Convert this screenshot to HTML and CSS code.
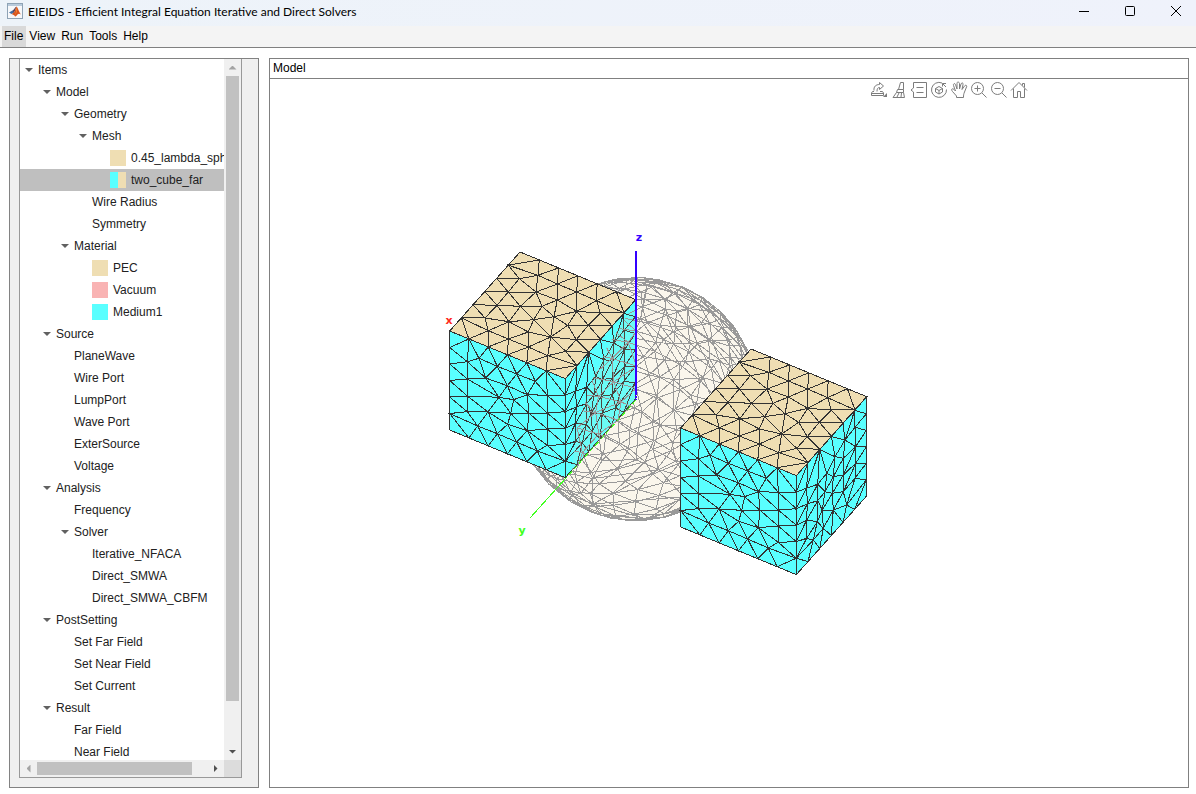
FILE: index.html
```html
<!DOCTYPE html>
<html lang="en">
<head>
    <meta charset="UTF-8">
    <meta name="viewport" content="width=device-width, initial-scale=1.0">
    <title>EIEIDS - Efficient Integral Equation Iterative and Direct Solvers</title>
    <link rel="stylesheet" href="styles.css">
</head>
<body>
  <header class="titlebar">
    <svg class="logo" width="16" height="16" viewBox="0 0 16 16">
      <rect x="0.5" y="0.5" width="15" height="15" fill="#f7f8fa" stroke="#8fa3b5"/>
      <rect x="1" y="1" width="14" height="2" fill="#b9cbdc"/>
      <path d="M2 9.500L5.500 7.500L7 9.500L4.500 11Z" fill="#3d6fa8"/>
      <path d="M5.500 7.500C7 7 8 4 9.500 3.500L8 8L6.500 10Z" fill="#5b4a63"/>
      <path d="M9.500 3.500C10.500 4 12 9 14 11.500C12.500 10.500 11.500 10.500 10.500 11.500C9.500 13 8.500 13.500 8 13.500C7.500 12 6 11.500 4.500 11L7 9.500C8 8 9 5 9.500 3.500Z" fill="#d9541e"/>
      <path d="M9.500 4C9.500 7 9 10 8 13C9 10.500 10.500 8 9.500 4Z" fill="#f7a543"/>
    </svg>
    <h1>EIEIDS - Efficient Integral Equation Iterative and Direct Solvers</h1>
    <div class="window-buttons">
      <button aria-label="Minimize"><svg width="12" height="12"><path d="M1 6.500H11"/></svg></button>
      <button aria-label="Maximize"><svg width="12" height="12"><rect x="1.500" y="1.500" width="9" height="9" rx="1"/></svg></button>
      <button aria-label="Close"><svg width="12" height="12"><path d="M1 1L11 11M11 1L1 11"/></svg></button>
    </div>
  </header>

  <nav class="menubar">
    <button class="active">File</button>
    <button>View</button>
    <button>Run</button>
    <button>Tools</button>
    <button>Help</button>
  </nav>

  <main>
    <aside class="sidebar">
      <div class="tree">
        <ul class="nodes">
          <li class="level-0"><button class="arrow" aria-label="Toggle Items"></button>Items</li>
          <li class="level-1"><button class="arrow" aria-label="Toggle Model"></button>Model</li>
          <li class="level-2"><button class="arrow" aria-label="Toggle Geometry"></button>Geometry</li>
          <li class="level-3"><button class="arrow" aria-label="Toggle Mesh"></button>Mesh</li>
          <li class="level-4 leaf"><i class="swatch pec"></i>0.45_lambda_sph</li>
          <li class="level-4 leaf selected"><i class="swatch mixed"></i>two_cube_far</li>
          <li class="level-3 leaf">Wire Radius</li>
          <li class="level-3 leaf">Symmetry</li>
          <li class="level-2"><button class="arrow" aria-label="Toggle Material"></button>Material</li>
          <li class="level-3 leaf"><i class="swatch pec"></i>PEC</li>
          <li class="level-3 leaf"><i class="swatch vacuum"></i>Vacuum</li>
          <li class="level-3 leaf"><i class="swatch medium"></i>Medium1</li>
          <li class="level-1"><button class="arrow" aria-label="Toggle Source"></button>Source</li>
          <li class="level-2 leaf">PlaneWave</li>
          <li class="level-2 leaf">Wire Port</li>
          <li class="level-2 leaf">LumpPort</li>
          <li class="level-2 leaf">Wave Port</li>
          <li class="level-2 leaf">ExterSource</li>
          <li class="level-2 leaf">Voltage</li>
          <li class="level-1"><button class="arrow" aria-label="Toggle Analysis"></button>Analysis</li>
          <li class="level-2 leaf">Frequency</li>
          <li class="level-2"><button class="arrow" aria-label="Toggle Solver"></button>Solver</li>
          <li class="level-3 leaf">Iterative_NFACA</li>
          <li class="level-3 leaf">Direct_SMWA</li>
          <li class="level-3 leaf">Direct_SMWA_CBFM</li>
          <li class="level-1"><button class="arrow" aria-label="Toggle PostSetting"></button>PostSetting</li>
          <li class="level-2 leaf">Set Far Field</li>
          <li class="level-2 leaf">Set Near Field</li>
          <li class="level-2 leaf">Set Current</li>
          <li class="level-1"><button class="arrow" aria-label="Toggle Result"></button>Result</li>
          <li class="level-2 leaf">Far Field</li>
          <li class="level-2 leaf">Near Field</li>
        </ul>
        <div class="scrollbar vertical">
          <button class="up" aria-label="Scroll up"></button>
          <div class="track"><div class="thumb"></div></div>
          <button class="down" aria-label="Scroll down"></button>
        </div>
        <div class="scrollbar horizontal">
          <button class="left" aria-label="Scroll left"></button>
          <div class="track"><div class="thumb"></div></div>
          <button class="right" aria-label="Scroll right"></button>
        </div>
        <div class="corner"></div>
      </div>
    </aside>

    <section class="viewer">
      <h2>Model</h2>
      <div class="toolbar">
        <button aria-label="Export"><svg viewBox="0 0 20 20"><path d="M5 11.500H3.500L2.500 13V15.500H14.500V13L13.500 11.500H11M2.500 13.500H14.500"/><path d="M5 10.500C4.500 6.500 7 4.500 10.500 4.500V2.500L14.500 6L10.500 9.500V7.500C8.500 7.500 8 9 8 11.500"/><path class="solid" d="M18 13V17H14Z"/></svg></button>
        <button aria-label="Brush"><svg viewBox="0 0 20 20"><path d="M9.500 9.500L11.500 2.500H14.500V9.500M8.500 9.500H14.500V12.500H7.500ZM7.500 12.500L4 17.500H15.500L14.500 12.500M8 17L10 13M12 17L12.500 13"/></svg></button>
        <button aria-label="Data tips"><svg viewBox="0 0 20 20"><path d="M4.500 2.500H17.500V17.500H4.500V12L2 10L4.500 8ZM7.500 7.500H14.500M7.500 12.500H14.500"/></svg></button>
        <button aria-label="Rotate"><svg viewBox="0 0 20 20"><path d="M13 3A7.500 7.500 0 1 0 17.500 9.500M13.500 6.500V3.500H17M13.500 3.500L17 7"/><path class="bold" d="M10 6.500L13.500 8.500V12L10 14L6.500 12V8.500ZM6.500 8.500L10 10.500L13.500 8.500M10 10.500V14"/></svg></button>
        <button aria-label="Pan"><svg viewBox="0 0 20 20"><path d="M7.500 17.500V16L3.500 11.500C1.500 9 3.500 8 5 9.500L6.500 11L4.500 5.500C4 3.500 6 3 6.500 4.500L8 9V3.500C8 1.500 10 1.500 10.500 3.500V9L12 4C12.500 2.500 14.500 2.500 14 4.500L13 9.500L15.500 6C16.500 4.500 18.500 5.500 17.500 7L15.500 12C14.500 14.500 14.500 15 14.500 17.500Z"/></svg></button>
        <button aria-label="Zoom in"><svg viewBox="0 0 20 20"><circle cx="8.500" cy="8.500" r="6"/><path d="M13 13L17.500 17.500M5.500 8.500H11.500M8.500 5.500V11.500"/></svg></button>
        <button aria-label="Zoom out"><svg viewBox="0 0 20 20"><circle cx="8.500" cy="8.500" r="6"/><path d="M13 13L17.500 17.500M5.500 8.500H11.500"/></svg></button>
        <button aria-label="Restore view"><svg viewBox="0 0 20 20"><path d="M2 10.500L10 2.500L18 10.500M4.500 8.500V17.500H8.500V11.500H11.500V17.500H15.500V8.500M13.500 5.500V3.500H15.500V7.500"/></svg></button>
      </div>
      <svg class="scene" viewBox="270 101 918 686">
        <defs>
          <!-- part of the sphere that comes out through the side of the first cube -->
          <clipPath id="outside">
            <path d="M636 304L624 320L607 347L601 362L590 384L585 403L578 422L575 440L572 472L636 401Z"/>
          </clipPath>
        </defs>
        <circle class="ball" cx="636" cy="399" r="121"/>
        <path class="wire" id="sphere"/>
        <g id="cube1"></g>
        <g clip-path="url(#outside)">
          <circle class="haze" cx="636" cy="399" r="121"/>
          <path class="wire" id="sphere-front"/>
        </g>
        <g id="cube2"></g>
        <path class="axis-z" d="M636 251V393"/>
        <path class="axis-z dotted" d="M636 393V400"/>
        <path class="axis-y dotted" d="M636 400L566 478"/>
        <path class="axis-y" d="M566 478L530 518"/>
        <text class="x" x="449" y="324">x</text>
        <text class="y" x="522" y="534">y</text>
        <text class="z" x="639" y="241">z</text>
      </svg>
    </section>
  </main>
<script src="mesh.js"></script>
</body>
</html>
```
FILE: mesh.js
```js
// cube corners and inner mesh points, three units per pixel
const SCALE = 3;
const faces = [
  {
    name: "front", origin: [32, 264], a: [347, 143], b: [0, 297],
    points: [
      [85, 356], [85, 408], [85, 459], [85, 506], [120, 346], [175, 370], [140, 405],
      [233, 393], [289, 415], [180, 463], [224, 470], [205, 428], [265, 455], [325, 457],
      [147, 507], [215, 511], [270, 511], [325, 510], [116, 549], [175, 572], [206, 544],
      [265, 563], [233, 597], [295, 624], [325, 558], [325, 607]
    ]
  },
  {
    name: "side", origin: [379, 407], a: [210, -235], b: [0, 297],
    points: [
      [410, 444], [443, 433], [412, 492], [443, 482], [410, 540], [410, 595], [442, 545],
      [470, 400], [465, 455], [495, 350], [490, 410], [525, 300], [520, 355], [555, 262],
      [557, 320], [557, 370], [555, 415], [520, 405], [520, 455], [487, 460], [490, 510],
      [457, 510], [460, 565], [430, 600], [530, 495]
    ]
  },
  {
    name: "top", origin: [32, 264], a: [347, 143], b: [211, -237],
    points: [
      [297, 97], [355, 123], [413, 147], [473, 173], [241, 107], [291, 147], [355, 171],
      [413, 205], [484, 210], [208, 147], [309, 190], [345, 221], [448, 247], [386, 247],
      [174, 187], [244, 190], [284, 230], [335, 282], [412, 290], [138, 225], [210, 236],
      [268, 267], [148, 263], [208, 288], [268, 312], [326, 338], [380, 325]
    ]
  }
];

// plain Delaunay triangulation, fast enough for a few dozen points
function triangulate(p) {
  const result = [];
  for (let i = 0; i < p.length; i++) {
    for (let j = i + 1; j < p.length; j++) {
      for (let k = j + 1; k < p.length; k++) {
        const [ax, ay] = p[i], [bx, by] = p[j], [cx, cy] = p[k];
        const d = 2 * (ax * (by - cy) + bx * (cy - ay) + cx * (ay - by));
        if (Math.abs(d) < 0.001) continue;
        const a2 = ax * ax + ay * ay, b2 = bx * bx + by * by, c2 = cx * cx + cy * cy;
        const ux = (a2 * (by - cy) + b2 * (cy - ay) + c2 * (ay - by)) / d;
        const uy = (a2 * (cx - bx) + b2 * (ax - cx) + c2 * (bx - ax)) / d;
        const r = (ax - ux) ** 2 + (ay - uy) ** 2;
        if (p.every(q => (q[0] - ux) ** 2 + (q[1] - uy) ** 2 > r - 1e-7)) {
          result.push([i, j, k]);
        }
      }
    }
  }
  return result;
}

function addPath(parent, name, d) {
  const path = document.createElementNS("http://www.w3.org/2000/svg", "path");
  path.setAttribute("class", name);
  path.setAttribute("d", d);
  parent.appendChild(path);
}

function drawCube(id, x, y) {
  const group = document.getElementById(id);
  faces.forEach(({ name, origin: o, a, b, points }) => {
    const det = a[0] * b[1] - a[1] * b[0];
    const uv = points.map(p => {
      const dx = p[0] - o[0], dy = p[1] - o[1];
      return [(dx * b[1] - dy * b[0]) / det, (a[0] * dy - a[1] * dx) / det];
    });
    for (let i = 0; i < 6; i++) {
      uv.push([i / 6, 0], [1, i / 6], [1 - i / 6, 1], [0, 1 - i / 6]);
    }
    const place = ([u, v]) =>
      (x + (o[0] + u * a[0] + v * b[0]) / SCALE).toFixed(1) + " " +
      (y + (o[1] + u * a[1] + v * b[1]) / SCALE).toFixed(1);
    addPath(group, "face " + name, "M" + [[0, 0], [1, 0], [1, 1], [0, 1]].map(place).join("L") + "Z");
    addPath(group, "edges", triangulate(uv).map(t => "M" + t.map(i => place(uv[i])).join("L") + "Z").join(""));
  });
}

function drawSphere(cx, cy, radius, count) {
  const pts = [];
  for (let i = 0; i < count; i++) {
    // uneven spacing, so that the rings do not show
    const z = 1 - (2 * i + 1 + Math.sin(i * 311.7) * 7) / (count + 14);
    const r = Math.sqrt(1 - z * z);
    const turn = i * 2.399963 + Math.sin(i * 127.1) * 0.06 / r;
    // tip the pole towards the viewer
    const py = r * Math.sin(turn);
    pts.push([r * Math.cos(turn), z * 0.82 + py * 0.57, py * 0.82 - z * 0.57]);
  }
  const sub = (a, b) => [a[0] - b[0], a[1] - b[1], a[2] - b[2]];
  const dot = (a, b) => a[0] * b[0] + a[1] * b[1] + a[2] * b[2];
  const cross = (a, b) => [a[1] * b[2] - a[2] * b[1], a[2] * b[0] - a[0] * b[2], a[0] * b[1] - a[1] * b[0]];
  const reach = 60 / count;
  let all = "", front = "";
  const seen = new Set();
  pts.forEach((p, i) => {
    const near = pts.map((q, j) => j).filter(j => j !== i && dot(sub(pts[j], p), sub(pts[j], p)) < reach * 2);
    near.forEach(j => near.forEach(k => {
      if (j <= i || k <= j) return;
      let n = cross(sub(pts[j], p), sub(pts[k], p));
      if (dot(n, p) < 0) n = n.map(v => -v);
      if (near.some(m => m !== j && m !== k && dot(n, sub(pts[m], p)) > 1e-9)) return;
      [[i, j], [j, k], [i, k]].forEach(([s, e]) => {
        const key = s + "-" + e;
        if (seen.has(key)) return;
        seen.add(key);
        const line = "M" + [s, e].map(v =>
          (cx + pts[v][0] * radius).toFixed(1) + " " + (cy - pts[v][1] * radius).toFixed(1)).join("L");
        all += line;
        if (pts[s][2] + pts[e][2] > 0) front += line;
      });
    }));
  });
  document.getElementById("sphere").setAttribute("d", all);
  document.getElementById("sphere-front").setAttribute("d", front);
}

drawSphere(636, 399, 122, 370);
drawCube("cube1", 439, 243);
drawCube("cube2", 670, 340);
```
FILE: styles.css
```css
* {
  box-sizing: border-box;
}
body {
  margin: 0;
  height: 100vh;
  display: flex;
  flex-direction: column;
  overflow: hidden;
  background: #fff;
  color: #000;
  font: 12px "Liberation Sans", Arial, sans-serif;
}
button {
  margin: 0;
  padding: 0;
  border: 0;
  background: none;
  color: inherit;
  font: inherit;
}
.titlebar {
  display: flex;
  align-items: center;
  height: 26px;
  padding: 0 0 4px 7px;
  background: linear-gradient(to right, #edf3f9, #eff2fb);
}
.titlebar h1 {
  flex: 1;
  margin: 0 0 0 5px;
  font: 12px Lato, "Segoe UI", sans-serif;
}
.window-buttons {
  display: flex;
  margin-right: -3px;
}
.window-buttons button {
  width: 46px;
  height: 20px;
}
.window-buttons svg {
  display: block;
  margin: auto;
  fill: none;
  stroke: #000;
}
.menubar {
  display: flex;
  height: 22px;
  padding-left: 2px;
  background: #f4f4f4;
  border-bottom: 1px solid #808080;
}
.menubar button {
  padding: 0 3px 1px;
}
.menubar .active {
  background: #d9d9d9;
  padding: 0 3px 1px 2px;
}
main {
  flex: 1;
  display: flex;
  gap: 10px;
  min-height: 0;
  padding: 10px 7px 6px 9px;
}
.sidebar {
  width: 250px;
  padding: 0 16px 9px 9px;
  background: #f0f0f0;
  border: 1px solid #828282;
}
.tree {
  display: grid;
  grid-template-columns: 1fr 17px;
  grid-template-rows: 1fr 17px;
  height: 100%;
  background: #fff;
  border: 1px solid #999;
  border-top: 0;
}
.nodes {
  margin: 0;
  padding: 0;
  overflow: hidden;
  min-height: 0;
  list-style: none;
  color: #212121;
}
.nodes li {
  display: flex;
  align-items: center;
  height: 22px;
  white-space: nowrap;
}
.nodes .selected {
  background: #bfbfbf;
}
.level-0 { padding-left: 0; }
.level-1 { padding-left: 18px; }
.level-2 { padding-left: 36px; }
.level-3 { padding-left: 54px; }
.level-4 { padding-left: 72px; }
.leaf::before {
  content: "";
  flex: none;
  width: 18px;
}
.arrow {
  flex: none;
  width: 18px;
  height: 22px;
}
.arrow::before {
  content: "";
  display: block;
  margin: 0 auto;
  width: 8px;
  height: 4px;
  background: #616161;
  clip-path: polygon(0 0, 100% 0, 50% 100%);
}
.swatch {
  flex: none;
  width: 16px;
  height: 16px;
  margin-right: 5px;
}
.pec { background: #efdeb3; }
.vacuum { background: #f9b3b3; }
.medium { background: #59ffff; }
.mixed { background: linear-gradient(to right, #59ffff 50%, #efdeb3 50%); }
.scrollbar {
  display: flex;
  min-height: 0;
  background: #f0f0f0;
}
.scrollbar button {
  flex: none;
  width: 17px;
  height: 17px;
}
.scrollbar button::before {
  content: "";
  display: block;
  margin: auto;
  background: #505050;
}
.scrollbar .up::before,
.scrollbar .down::before {
  width: 8px;
  height: 4px;
  clip-path: polygon(0 0, 100% 0, 50% 100%);
}
.scrollbar .up::before {
  background: #a3a3a3;
  clip-path: polygon(50% 0, 100% 100%, 0 100%);
}
.scrollbar .left::before,
.scrollbar .right::before {
  width: 4px;
  height: 8px;
  clip-path: polygon(0 0, 100% 50%, 0 100%);
}
.scrollbar .left::before {
  background: #a3a3a3;
  clip-path: polygon(100% 0, 100% 100%, 0 50%);
}
.track {
  flex: 1;
  padding: 2px 0;
}
.vertical {
  flex-direction: column;
}
.vertical .track {
  padding: 0 2px;
}
.vertical .thumb {
  height: calc(100% - 42px);
  background: #c1c1c1;
}
.horizontal .thumb {
  width: 91%;
  height: 13px;
  background: #c1c1c1;
}
.corner {
  background: #dcdcdc;
}
.viewer {
  flex: 1;
  display: flex;
  flex-direction: column;
  min-width: 0;
  border: 1px solid #808080;
}
.viewer h2 {
  flex: none;
  height: 20px;
  margin: 0;
  padding-left: 3px;
  border-bottom: 1px solid #808080;
  font-size: 12px;
  font-weight: normal;
  line-height: 18px;
}
.toolbar {
  display: flex;
  justify-content: flex-end;
  height: 22px;
  padding: 1px 159px 1px 0;
}
.toolbar button {
  width: 20px;
  height: 20px;
}
.toolbar svg {
  display: block;
  width: 20px;
  height: 20px;
  fill: none;
  stroke: #7c7c7c;
}
.toolbar .solid {
  fill: #7c7c7c;
  stroke: none;
}
.scene {
  flex: 1;
  display: block;
  width: 100%;
  min-height: 0;
  shape-rendering: crispEdges;
}
.ball {
  fill: #faf6ec;
}
.haze {
  fill: #efdeb3;
  opacity: .12;
}
.wire {
  fill: none;
  stroke: #999;
}
.top {
  fill: #efdeb3;
}
.front,
.side {
  fill: #59ffff;
}
.edges {
  fill: none;
  stroke: #333;
}
.axis-z {
  fill: none;
  stroke: #3300ff;
  stroke-width: 2;
}
.axis-y {
  fill: none;
  stroke: #40ff20;
  stroke-width: 1;
}
.dotted {
  stroke-dasharray: 2 1;
}
.axis-y.dotted {
  stroke-dasharray: 5 3;
}
.scene text {
  font: bold 11px "DejaVu Sans", Verdana, sans-serif;
  text-anchor: middle;
}
.x { fill: #ff2a20; }
.y { fill: #40ff20; }
.z { fill: #3300ff; }
```
